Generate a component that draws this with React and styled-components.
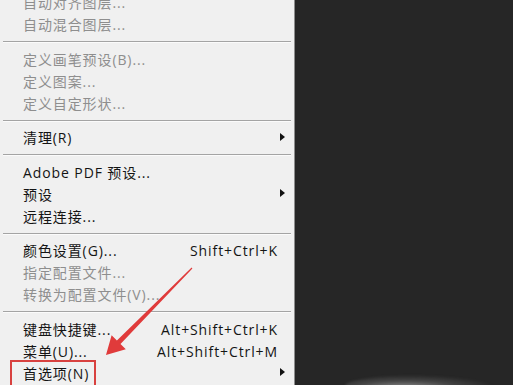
import React from "react";
import styled, { createGlobalStyle } from "styled-components";

const Global = createGlobalStyle`
  html, body { margin: 0; padding: 0; background: #262626; overflow: hidden; }
  body { width: 513px; height: 385px; }
`;

const Page = styled.div`
  display: flex;
  width: 513px;
  height: 385px;
  overflow: hidden;
  position: relative;
  background: #262626;
`;

const Menu = styled.div`
  width: 294px;
  flex: none;
  background: #f0f0f0;
  border-right: 1px solid #8d8d8d;
  margin-top: -8px;
  font-family: "Open Sans", "Noto Sans CJK SC", sans-serif;
  font-size: 14px;
  letter-spacing: 0.9px;
  display: flex;
  flex-direction: column;
`;

const Row = styled.div`
  position: relative;
  height: 22px;
  line-height: 22px;
  display: grid;
  grid-template-columns: 1fr auto 17px;
  align-items: center;
  padding-left: 23px;
  color: ${(p) => (p.$disabled ? "#8e8e8e" : "#141414")};
  white-space: nowrap;
`;

const Label = styled.span``;
const Shortcut = styled.span`
  text-align: right;
  margin-right: -1px;
`;

const ArrowCell = styled.span`
  display: flex;
  align-items: center;
  padding-left: 3px;
  height: 22px;
`;

const Tri = styled.span`
  width: 0;
  height: 0;
  border-top: 4px solid transparent;
  border-bottom: 4px solid transparent;
  border-left: 5px solid #111;
  margin-top: -3px;
`;

const Sep = styled.div`
  height: 13px;
  display: flex;
  flex-direction: column;
  padding: 5px 3px 0 3px;
  box-sizing: border-box;
  &::before {
    content: "";
    display: block;
    height: 1px;
    background: #a4a4a4;
  }
  &::after {
    content: "";
    display: block;
    height: 1px;
    background: #fbfbfb;
  }
`;

const Highlight = styled.span`
  position: absolute;
  left: 10px;
  top: -3px;
  width: 86px;
  height: 30px;
  border: 2px solid #d8413f;
  box-sizing: border-box;
  pointer-events: none;
`;

const Canvas = styled.div`
  flex: 1;
  position: relative;
  background: #262626;
`;

const Glow = styled.div`
  position: absolute;
  left: 50px;
  bottom: -12px;
  width: 150px;
  height: 22px;
  border-radius: 50%;
  background: radial-gradient(ellipse at 40% 60%, rgba(220,220,220,0.6) 0%, rgba(140,140,140,0.3) 40%, rgba(38,38,38,0) 72%);
  filter: blur(1px);
`;

const ArrowSvg = styled.svg`
  position: absolute;
  left: 0;
  top: 0;
  pointer-events: none;
`;

const groups = [
  [
    { t: "自动对齐图层...", d: true },
    { t: "自动混合图层...", d: true },
  ],
  [
    { t: "定义画笔预设(B)...", d: true },
    { t: "定义图案...", d: true },
    { t: "定义自定形状...", d: true },
  ],
  [{ t: "清理(R)", sub: true }],
  [
    { t: "Adobe PDF 预设..." },
    { t: "预设", sub: true },
    { t: "远程连接..." },
  ],
  [
    { t: "颜色设置(G)...", k: "Shift+Ctrl+K" },
    { t: "指定配置文件...", d: true },
    { t: "转换为配置文件(V)...", d: true },
  ],
  [
    { t: "键盘快捷键...", k: "Alt+Shift+Ctrl+K" },
    { t: "菜单(U)...", k: "Alt+Shift+Ctrl+M" },
    { t: "首选项(N)", sub: true, hl: true },
  ],
];

export default function App() {
  return (
    <>
      <Global />
      <Page>
        <Menu>
          {groups.map((g, gi) => (
            <React.Fragment key={gi}>
              {gi > 0 && <Sep />}
              {g.map((it) => (
                <Row key={it.t} $disabled={it.d}>
                  <Label>{it.t}</Label>
                  <Shortcut>{it.k || ""}</Shortcut>
                  <ArrowCell>{it.sub && <Tri />}</ArrowCell>
                  {it.hl && <Highlight />}
                </Row>
              ))}
            </React.Fragment>
          ))}
        </Menu>
        <Canvas>
          <Glow />
        </Canvas>
        <ArrowSvg width="513" height="385" viewBox="0 0 513 385">
          <polygon
            points="106,355 111.6,335.2 116.9,340.4 191.6,267.6 192.4,268.4 120.5,344 125.8,349.2"
            fill="#e03b3b"
          />
        </ArrowSvg>
      </Page>
    </>
  );
}
